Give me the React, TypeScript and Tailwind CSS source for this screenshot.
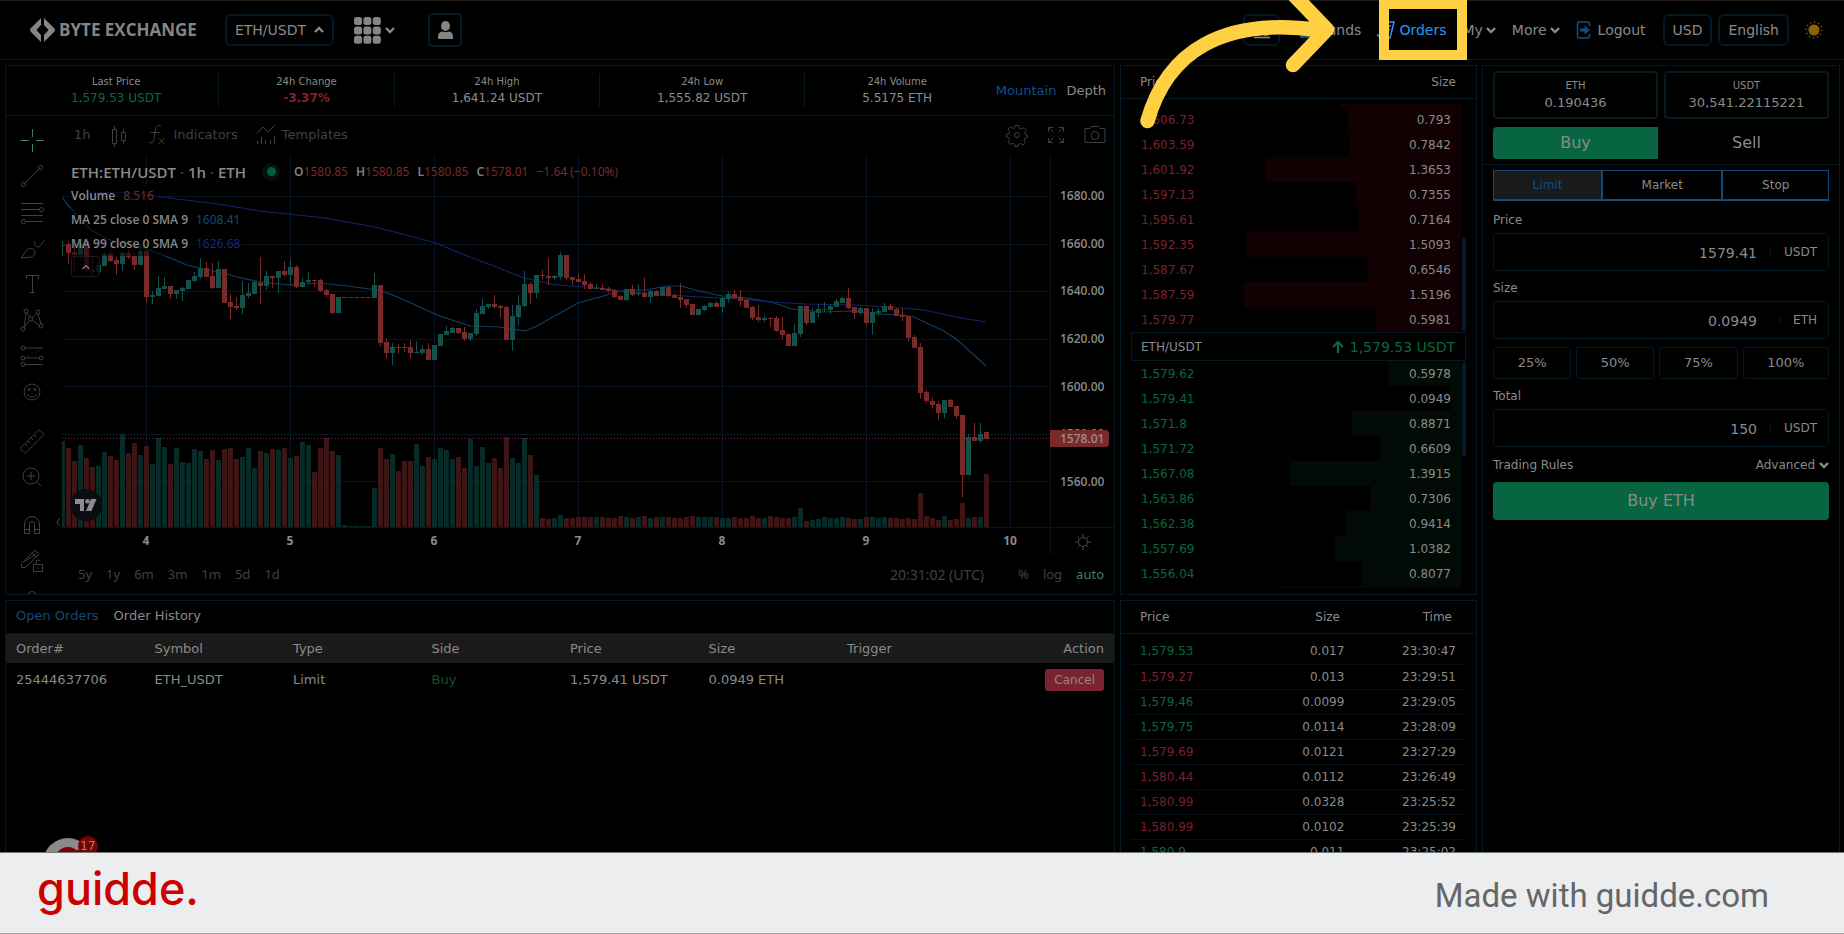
import React from "react";

type Candle = [string, number, number, number, number];

/* [direction, high, open/close top, open/close bottom, low], in thirds of a chart unit */
const EARLY: Candle[] = [
  ["u", 33, 44, 47, 77], ["d", 36, 42, 69, 102], ["d", 40, 66, 75, 122], ["u", 35, 38, 74, 90], ["d", 30, 33, 120, 130],
  ["d", 75, 120, 126, 142], ["u", 95, 105, 126, 130], ["u", 66, 72, 109, 109], ["d", 62, 72, 93, 96], ["d", 80, 90, 102, 135],
  ["u", 64, 68, 101, 122], ["d", 60, 70, 80, 88], ["d", 70, 78, 104, 120], ["u", 45, 63, 104, 104], ["d", 60, 62, 201, 220],
  ["u", 183, 196, 201, 222], ["u", 138, 174, 198, 198], ["u", 140, 168, 177, 177], ["d", 168, 168, 192, 206], ["u", 180, 180, 192, 208],
  ["u", 172, 174, 184, 213], ["u", 150, 150, 177, 177], ["u", 125, 138, 152, 156], ["u", 84, 114, 141, 146], ["d", 97, 114, 140, 140],
  ["d", 100, 137, 174, 177], ["u", 92, 117, 174, 174], ["d", 117, 117, 219, 219], ["d", 192, 216, 231, 267], ["d", 202, 228, 234, 240],
  ["u", 153, 195, 234, 252], ["u", 160, 189, 198, 204], ["u", 152, 156, 192, 192], ["d", 81, 158, 168, 222], ["u", 123, 138, 168, 180],
  ["d", 138, 138, 144, 174], ["u", 123, 123, 144, 188], ["d", 94, 122, 136, 138], ["u", 87, 111, 136, 168], ["d", 105, 111, 171, 174],
  ["u", 144, 156, 171, 171], ["u", 126, 150, 157, 162], ["d", 150, 150, 153, 170], ["d", 147, 150, 183, 186], ["d", 178, 180, 195, 201],
  ["d", 192, 192, 249, 252], ["u", 201, 201, 249, 249], ["u", 201, 201, 204, 204], ["u", 201, 201, 204, 204], ["u", 201, 201, 204, 204],
  ["u", 201, 201, 204, 204], ["u", 201, 201, 204, 204], ["u", 129, 165, 204, 204], ["d", 165, 165, 339, 348], ["d", 324, 336, 368, 388],
  ["u", 339, 351, 368, 405], ["d", 342, 351, 354, 372], ["d", 340, 351, 354, 366], ["d", 330, 351, 368, 387], ["u", 334, 366, 369, 369],
  ["u", 345, 357, 368, 375], ["d", 340, 357, 390, 390], ["u", 345, 345, 390, 390], ["u", 312, 312, 349, 349], ["u", 288, 303, 314, 314],
  ["u", 290, 294, 308, 308], ["d", 294, 294, 308, 312], ["d", 290, 306, 328, 332], ["u", 309, 309, 328, 332], ["u", 237, 249, 312, 318],
  ["u", 207, 228, 252, 252], ["u", 222, 222, 230, 237], ["d", 195, 222, 231, 234], ["d", 225, 228, 234, 264], ["d", 228, 231, 330, 330],
  ["u", 225, 258, 330, 363], ["u", 195, 225, 261, 285], ["u", 123, 162, 228, 232], ["d", 156, 162, 189, 222], ["u", 135, 135, 189, 204],
  ["d", 120, 135, 139, 147], ["d", 84, 139, 144, 165], ["u", 135, 138, 144, 150], ["u", 66, 75, 141, 146], ["d", 75, 75, 144, 150],
];
const LATE: Candle[] = [
  ["d", -9, -9, 0, 15], ["d", -21, -3, 6, 6], ["d", -18, 3, 14, 27], ["d", 6, 12, 26, 27], ["u", 12, 23, 27, 28],
  ["d", 12, 25, 30, 30], ["d", 21, 27, 32, 38], ["d", 30, 30, 50, 54], ["d", 45, 48, 59, 60], ["u", 27, 27, 60, 62],
  ["d", 15, 27, 45, 48], ["u", 12, 38, 41, 48], ["d", -6, 39, 51, 52], ["u", 30, 33, 51, 69], ["d", 30, 33, 47, 48],
  ["u", 20, 21, 47, 48], ["d", 21, 21, 47, 50], ["d", 38, 45, 53, 54], ["d", 10, 51, 60, 84], ["d", 56, 57, 74, 84],
  ["d", 72, 72, 104, 105], ["u", 87, 87, 104, 105], ["u", 74, 78, 90, 93], ["u", 66, 69, 80, 81], ["d", 63, 69, 80, 81],
  ["u", 52, 54, 81, 99], ["u", 36, 42, 57, 68], ["d", 30, 42, 53, 57], ["d", 30, 51, 62, 78], ["d", 60, 60, 84, 84],
  ["d", 78, 81, 113, 119], ["d", 75, 111, 119, 126], ["u", 108, 114, 119, 126], ["d", 111, 113, 116, 140], ["d", 108, 114, 152, 156],
  ["d", 111, 150, 164, 177], ["d", 162, 162, 197, 197], ["u", 132, 159, 197, 197], ["u", 78, 78, 161, 170], ["d", 78, 78, 129, 134],
  ["u", 84, 96, 129, 129], ["u", 72, 87, 98, 110], ["u", 66, 87, 90, 95], ["u", 76, 78, 90, 102], ["u", 56, 63, 80, 81],
  ["u", 51, 54, 69, 69], ["d", 24, 54, 84, 87], ["d", 80, 81, 98, 117], ["u", 81, 84, 98, 104], ["d", 84, 84, 129, 134],
  ["u", 84, 96, 129, 165], ["u", 84, 93, 99, 108], ["u", 69, 78, 95, 95], ["d", 72, 78, 90, 90], ["d", 84, 86, 108, 108],
  ["d", 84, 104, 111, 122], ["d", 108, 108, 174, 186], ["d", 165, 171, 203, 203], ["d", 189, 201, 339, 357], ["d", 330, 336, 363, 369],
  ["d", 354, 363, 375, 384], ["d", 363, 372, 399, 420], ["u", 360, 360, 399, 414], ["d", 357, 360, 380, 381], ["d", 378, 378, 408, 417],
  ["d", 405, 405, 585, 651], ["u", 462, 471, 585, 585], ["d", 429, 471, 482, 483], ["u", 429, 462, 482, 489], ["d", 456, 456, 477, 477],
];
const shift = (by: number) => (c: Candle): Candle => [c[0], (c[1] + by) / 3, (c[2] + by) / 3, (c[3] + by) / 3, (c[4] + by) / 3];
const CANDLES: Candle[] = [...EARLY.map(shift(690)), ...LATE.map(shift(840))];

/* volume bar tops, in thirds, where 741 is the base line */
const VOLUMES = [
  484, 504, 543, 495, 534, 561, 558, 516, 528, 540, 462, 519, 489, 525, 498, 552, 474, 501, 552, 504, 546, 549, 507, 513, 537, 510, 540, 507, 504, 537,
  531, 504, 564, 513, 519, 507, 510, 504, 534, 528, 486, 495, 576, 504, 474, 513, 525, 735, 738, 738, 738, 738, 624, 504, 537, 522, 573, 543, 543, 492,
  558, 531, 537, 504, 510, 537, 531, 564, 477, 558, 501, 549, 534, 564, 471, 534, 549, 474, 525, 585, 714, 717, 714, 705, 714, 714, 711, 711, 711, 711,
  711, 714, 714, 708, 711, 714, 711, 708, 714, 711, 711, 711, 714, 714, 711, 708, 711, 711, 711, 711, 714, 714, 711, 714, 714, 708, 714, 714, 708, 711,
  714, 714, 711, 684, 723, 720, 717, 711, 714, 714, 711, 714, 717, 717, 711, 711, 714, 711, 714, 714, 717, 714, 717, 639, 708, 714, 720, 708, 720, 717,
  669, 714, 711, 711, 582,
];

const MA25 =
  "62,197 68,205 78,216 91,230 110,240 147,249 163,255 187,265 203,269 227,274 237,277 260,282 290,285 320,283 347,286 370,289 382,291 400,298 437,315 470,326 500,327 525,331 537,326 560,313 578,303 596,298 614,293 626,290 646,290 667,286 681,286 699,291 722,296 740,297 771,302 792,309 821,312 853,311 878,314 903,315 914,317 931,325 944,331 956,339 964,346 986,366";
const MA99 =
  "92,192 126,193 161,197 218,204 260,211 325,218 375,227 406,235 436,243 467,256 494,266 524,278 551,284 570,286 589,287 610,289 626,292 642,293 699,297 740,299 774,302 806,304 856,305 903,308 924,310 956,317 967,319 986,322";

const s = { fill: "none", stroke: "currentColor", strokeWidth: 1 } as const;

function Svg({ children, className = "size-7" }: { children: React.ReactNode; className?: string }) {
  return (
    <svg viewBox="0 0 28 28" className={className} {...s} aria-hidden="true">
      {children}
    </svg>
  );
}

const TOOLS: { name: string; art: React.ReactNode }[] = [
  { name: "Cross", art: <path className="text-[#3f7d75]" stroke="currentColor" d="M14.5 3v8M14.5 18v8M3 14.5h8M18 14.5h8" /> },
  { name: "Trend line", art: <><circle cx="5.500" cy="22.500" r="2" /><circle cx="22.500" cy="5.500" r="2" /><path d="M7 21L21 7" /></> },
  { name: "Fib retracement", art: <><path d="M3 5.500h22M3 11.500h18.500M3 17.500h22M7.500 23.500H25" /><circle cx="23.500" cy="11.500" r="2" /><circle cx="5.500" cy="23.500" r="2" /></> },
  { name: "Brush", art: <path d="M3 23.500c3-2 3-5 6-8 3-2 7-1 8 1 1 3-2 7-6 7zM17 7c-1 3 0 6 3 6s4-5 7-7" /> },
  { name: "Text", art: <path d="M8.500 9V5.500h12V9M14.500 5.500v17M12 22.500h5" /> },
  { name: "Patterns", art: <><circle cx="8" cy="5" r="2" /><circle cx="20" cy="6" r="2" /><circle cx="5" cy="23" r="2" /><circle cx="23" cy="20" r="2" /><circle cx="12.500" cy="13" r="2" /><path d="M8 7L6 21M9 7l3 4M14 12l5-5M20 8l3 10M14 14l7 5M11 15l-5 6" /></> },
  { name: "Forecast", art: <><circle cx="5" cy="6" r="2" /><circle cx="5" cy="16" r="2" /><circle cx="23" cy="16" r="2" /><circle cx="5" cy="22.500" r="2" /><path d="M7 6h18M7 16h14M7 22.500h18" /><path d="M10 14L24 7" strokeDasharray="1 3" /></> },
  { name: "Icons", art: <><circle cx="14" cy="14" r="8" /><circle cx="11" cy="11.500" r="1" /><circle cx="17" cy="11.500" r="1" /><path d="M9.500 16c1.500 4 7.500 4 9 0" /></> },
  { name: "Measure", art: <path d="M3 20.500L20 3.500q1-1 2 0l3 3q1 1 0 2L8 25.500q-1 1-2 0l-3-3q-1-1 0-2zM7 17l2 2M10 14l2 2M13 11l2 2M16 8l2 2" /> },
  { name: "Zoom in", art: <><circle cx="13" cy="13" r="8" /><path d="M13 9v8M9 13h8M19 19l4 4" /></> },
  { name: "Magnet", art: <path d="M6.500 22.500V13a7.500 7.500 0 0 1 15 0v9.500h-5V13a2.500 2.500 0 0 0-5 0v9.500zM6.500 18.500h5M16.500 18.500h5" /> },
  { name: "Lock drawings", art: <><path d="M3.500 20.500v-4L16 4q1-1 2 0l2 2q1 1 0 2L7.500 20.500zM6 15l12-8M9 19L19 9M14 6l4 4" /><path d="M15.500 17.500h9v7h-9zM18 17.500V15q0-2 2-2 2 0 2 1M20 20.500v1.500" /></> },
  { name: "Hide drawings", art: <path d="M10 12.500a4 4 0 0 1 8 0v2M7 14.500h14v8H7z" /> },
];

const STATS = [
  ["Last Price", "1,579.53 USDT", "text-[#0a6b3d]"],
  ["24h Change", "-3.37%", "text-[#86202e] font-bold"],
  ["24h High", "1,641.24 USDT", "text-[#8c8c8c]"],
  ["24h Low", "1,555.82 USDT", "text-[#8c8c8c]"],
  ["24h Volume", "5.5175 ETH", "text-[#8c8c8c]"],
];

const ASKS: [string, string, number][] = [
  ["1,606.73", "0.793", 113], ["1,603.59", "0.7842", 112], ["1,601.92", "1.3653", 195], ["1,597.13", "0.7355", 105], ["1,595.61", "0.7164", 102],
  ["1,592.35", "1.5093", 215], ["1,587.67", "0.6546", 93], ["1,587.59", "1.5196", 217], ["1,579.77", "0.5981", 85],
];
const BIDS: [string, string, number][] = [
  ["1,579.62", "0.5978", 73], ["1,579.41", "0.0949", 11], ["1,571.8", "0.8871", 109], ["1,571.72", "0.6609", 81], ["1,567.08", "1.3915", 171],
  ["1,563.86", "0.7306", 90], ["1,562.38", "0.9414", 116], ["1,557.69", "1.0382", 127], ["1,556.04", "0.8077", 99],
];
const TRADES: [string, string, string, boolean][] = [
  ["1,579.53", "0.017", "23:30:47", true], ["1,579.27", "0.013", "23:29:51", false], ["1,579.46", "0.0099", "23:29:05", true],
  ["1,579.75", "0.0114", "23:28:09", true], ["1,579.69", "0.0121", "23:27:29", false], ["1,580.44", "0.0112", "23:26:49", false],
  ["1,580.99", "0.0328", "23:25:52", false], ["1,580.99", "0.0102", "23:25:39", false], ["1,580.9", "0.011", "23:25:02", true],
];

function Chevron({ up = false }: { up?: boolean }) {
  return (
    <svg viewBox="0 0 10 8" className="h-2 w-2.5 shrink-0" fill="none" stroke="currentColor" strokeWidth="2.4" aria-hidden="true">
      <path d={up ? "M1 6l4-4 4 4" : "M1 2l4 4 4-4"} />
    </svg>
  );
}

function Header() {
  return (
    <header className="relative flex h-[60px] shrink-0 items-center border-t border-b border-t-[#1c1c1c] border-b-[#051522] pl-[30px] pr-[21px] text-sm">
      <a href="#home" className="flex items-center gap-1 text-[#858585]">
        <svg viewBox="0 0 25 24" className="h-6 w-[25px]" fill="currentColor" aria-hidden="true">
          <path d="M11 0v7L6.500 12l4.500 5v7L1 14q-2-2 0-4zM14 0v7l4.500 5-4.500 5v7l10-10q2-2 0-4z" />
        </svg>
        <span className="font-['Open_Sans',sans-serif] text-[17px] font-bold whitespace-nowrap">BYTE EXCHANGE</span>
      </a>
      <button className="ml-7 flex h-8 items-center gap-2 rounded-md border-2 border-[#051826] px-2">
        ETH/USDT <Chevron up />
      </button>
      <button aria-label="All markets" className="ml-5 flex items-center gap-1">
        <svg viewBox="0 0 27 27" className="size-[27px]" fill="#858585" aria-hidden="true">
          {[0, 1, 2].map((r) => [0, 1, 2].map((c) => <rect key={`${r}${c}`} x={c * 9.4} y={r * 9.4} width="8" height="8" rx="2.500" />))}
        </svg>
        <Chevron />
      </button>
      <button aria-label="Account" className="ml-[33px] flex h-[34px] w-[34px] items-center justify-center rounded-[4px] border-2 border-[#051826]">
        <svg viewBox="0 0 15 18" className="h-[18px] w-[15px]" fill="#858585" aria-hidden="true">
          <ellipse cx="7.500" cy="5" rx="4.500" ry="5" />
          <path d="M0 17v-1q0-5 4-5.500 3.500 1.500 7 0 4 .5 4 5.500v1q0 1-1 1H1q-1 0-1-1z" />
        </svg>
      </button>
      <nav className="ml-auto flex items-center">
        <button aria-label="Exchange" className="flex h-8 w-[37px] items-center justify-center rounded-md border-2 border-[#051826]">
          <svg viewBox="0 0 18 18" className="size-[18px]" fill="none" stroke="currentColor" strokeWidth="1.500" aria-hidden="true">
            <path d="M2 6l7-5 7 5zM3.500 8v6h3V8M11.500 8v6h3V8M9 8v6M1 16.500h16" />
          </svg>
        </button>
        <a href="#funds" className="ml-5 flex items-center gap-1">
          <svg viewBox="0 0 16 16" className="size-4" fill="#124f80" aria-hidden="true">
            <path d="M0 2h14v3h2v11H0z" />
          </svg>
          Funds
        </a>
        <a href="#orders" className="ml-4 flex items-center gap-1 text-[#2b97f0]">
          <svg viewBox="0 0 18 18" className="size-[18px]" fill="none" stroke="currentColor" strokeWidth="1.500" aria-hidden="true">
            <path d="M9 1h8l-4 16H5M10 5h4M9 8.500h4M0 13q2 4 5 2" />
          </svg>
          Orders
        </a>
        <button className="ml-4 flex items-center gap-[3px]">My <Chevron /></button>
        <button className="ml-4 flex items-center gap-[3px]">More <Chevron /></button>
        <a href="#logout" className="ml-4 flex items-center gap-1.5">
          <svg viewBox="0 0 16 19" className="h-[19px] w-4" aria-hidden="true">
            <path d="M13.500 5V2.500q0-1.500-1.500-1.500H3Q1.500 1 1.500 2.500v13Q1.500 17 3 17h9q1.500 0 1.500-1.500V13" fill="none" stroke="#124f80" strokeWidth="1.500" />
            <path d="M4 7.500h4.500V4.500L14 9l-5.500 4.500v-3H4z" fill="#124f80" />
          </svg>
          Logout
        </a>
        <button className="ml-[17px] flex h-8 items-center rounded-md border-2 border-[#051826] px-2">USD</button>
        <button className="ml-1.5 flex h-8 items-center rounded-md border-2 border-[#051826] px-2">English</button>
        <button aria-label="Theme" className="ml-4">
          <svg viewBox="0 0 18 18" className="size-[18px]" aria-hidden="true">
            <circle cx="9" cy="9" r="5.500" fill="#8a6508" />
            <circle cx="9" cy="9" r="7.800" fill="none" stroke="#8a6508" strokeWidth="1.800" strokeDasharray="1 3.080" />
          </svg>
        </button>
      </nav>
      <svg viewBox="1135 0 205 130" className="pointer-events-none absolute -top-px right-[504px] z-20 h-[130px] w-[205px]" fill="none" stroke="#ffd042" strokeWidth="14.500" strokeLinecap="round" strokeLinejoin="round" aria-hidden="true">
        <path d="M1147.500 121C1167 52 1222 17 1318 30" />
        <path d="M1290-9L1327 29.500 1293 65" />
      </svg>
      <div className="pointer-events-none absolute -top-px right-[377px] z-20 h-[60px] w-[88px] border-10 border-t-9 border-[#ffd042]" />
    </header>
  );
}

function PriceChart() {
  return (
    <svg viewBox="62 155 988 372" preserveAspectRatio="xMinYMin slice" className="block size-full" shapeRendering="crispEdges" role="img" aria-label="ETH/USDT hourly candles">
      <g stroke="#051523" strokeWidth="1">
        {[146, 290, 434, 578, 722, 866, 1010].map((x) => <path key={x} d={`M${x}.500 155V527`} />)}
        {[196, 244, 291, 339, 386, 434, 481].map((y) => <path key={y} d={`M62 ${y}.500H1050`} />)}
      </g>
      {VOLUMES.map((v, i) => (
        <rect key={i} x={60 + i * 6} y={280 + v / 3} width="5" height={(741 - v) / 3} fill={CANDLES[i][0] === "u" ? "#0b332f" : "#481918"} fillOpacity="0.85" />
      ))}
      <g fill="none" strokeWidth="1.200" shapeRendering="auto">
        <polyline points={MA25} stroke="#0f3f66" />
        <polyline points={MA99} stroke="#13246b" />
      </g>
      {CANDLES.map(([dir, hi, top, bottom, lo], i) => (
        <g key={i} fill={dir === "u" ? "#13524c" : "#782a29"}>
          <rect x={62 + i * 6} y={Math.round(hi)} width="1" height={Math.max(1, Math.round(lo) - Math.round(hi))} />
          <rect x={60 + i * 6} y={Math.round(top)} width="5" height={Math.max(1, Math.round(bottom) - Math.round(top))} />
        </g>
      ))}
      <path d="M62 438.500H1050" stroke="#782a29" strokeDasharray="1 2" />
    </svg>
  );
}

const chartFont = "font-['Noto_Sans',sans-serif]";
const legendFont = "font-['Open_Sans',sans-serif]";

function ChartPanel() {
  const ohlc = [["O", "1580.85"], ["H", "1580.85"], ["L", "1580.85"], ["C", "1578.01"]];
  return (
    <section className="border border-[#051826]">
      <div className="flex h-[50px] items-center border-b border-[#051826] pl-2">
        {STATS.map(([label, value, tone], i) => (
          <div key={label} className={`flex h-[33px] flex-col items-center px-[57px] whitespace-nowrap ${i < 4 ? "border-r border-[#051826]" : ""}`}>
            <span className="text-[10px] leading-[15px]">{label}</span>
            <span className={`text-xs leading-[18px] ${tone}`}>{value}</span>
          </div>
        ))}
        <div className="ml-auto flex gap-2.5 pr-2 text-[13px]">
          <button className="text-[#104e8c]">Mountain</button>
          <button>Depth</button>
        </div>
      </div>
      <div className="flex h-[478px] overflow-hidden">
        <div className="relative flex w-14 shrink-0 flex-col items-center overflow-hidden pt-1.5 pr-1 text-[#3f4044]">
          {TOOLS.map((t, i) => (
            <button key={t.name} aria-label={t.name} className={`flex h-9 shrink-0 items-center justify-center ${i === 8 ? "mt-[13px]" : i === 10 ? "mt-3" : ""}`}>
              <Svg>{t.art}</Svg>
            </button>
          ))}
          <svg viewBox="0 0 4 8" className="absolute right-0.5 bottom-[68px] h-2 w-1" fill="none" stroke="#555" aria-hidden="true">
            <path d="M3.500.5L1 4l2.500 3.500" />
          </svg>
        </div>
        <div className="flex min-w-0 grow flex-col">
          <div className="flex h-[39px] shrink-0 items-center pl-3 pb-px text-[13px] text-[#3f4044]">
            <button>1h</button>
            <button aria-label="Candles" className="ml-3.5">
              <Svg><path d="M7.500 8.500h4v14h-4zM9.500 5v3.500M9.500 22.500V26M16.500 11.500h4v8h-4zM18.500 8v3.500M18.500 19.500V23" /></Svg>
            </button>
            <button className="ml-2.5 flex items-center gap-[3px]">
              <Svg><path d="M18 5c-3-1.500-5 0-5.500 4L11 18c-.5 3.500-2 4.500-5 3.500M7.500 11.500H17M15.500 17l6 6M21.500 17l-6 6" /></Svg>
              Indicators
            </button>
            <button className="ml-3.5 flex items-center gap-0.5">
              <Svg><path d="M5 12l6-6 5 5 7-7M5.500 20v3M9.500 16v7M13.500 19v4M18.500 19v4M22.500 15v8" /></Svg>
              Templates
            </button>
            <div className="ml-auto flex items-center gap-[11px] pr-[5px]">
              <button aria-label="Settings">
                <Svg><circle cx="14" cy="14" r="2.500" /><path d="M12 4.500h4l.5 3 2 .8 2.500-1.800 2.500 2.500L21.700 11.500l.8 2 2 .5v2.500l-2.500.5-1 2 1.500 2.500-2.500 2.500-2.500-1.500-2 .8-.5 2.200h-3l-.5-2.500-2-.8L7.500 23.500 5 21l1.500-2.500-.8-2-2.200-.5v-3l2.500-.5.8-2L5 8l2.500-2.500L10 7.500l1.500-.5z" /></Svg>
              </button>
              <button aria-label="Full screen">
                <Svg><path d="M6.500 11V6.500H11M7 7l4.500 4.500M17 6.500h4.500V11M21 7l-4.500 4.500M6.500 17v4.500H11M7 21l4.500-4.500M17 21.500h4.500V17M21 21l-4.500-4.500" /></Svg>
              </button>
              <button aria-label="Snapshot">
                <Svg><path d="M4 7.500h5l1.500-2h7l1.500 2h5v14H4z" strokeLinejoin="round" /><circle cx="14" cy="14.500" r="4" /></Svg>
              </button>
            </div>
          </div>
          <div className="relative flex h-[372px] shrink-0">
            <div className="min-w-0 grow"><PriceChart /></div>
            <div className={`relative w-16 shrink-0 border-l border-[#101214] pt-[33px] text-xs font-semibold ${legendFont}`}>
              <div className="flex h-[302px] flex-col justify-between pl-[9px] leading-4">
                {["1680.00", "1660.00", "1640.00", "1620.00", "1600.00", "1580.00", "1560.00"].map((p) => <span key={p}>{p}</span>)}
              </div>
              <div className="absolute top-[275px] -left-px h-[17px] w-[59px] rounded-r-sm bg-[#7a2a2a] pl-2.5 leading-[17px] text-[#9a8a8a]">1578.01</div>
            </div>
            <div className={`absolute top-1 left-[9px] text-xs ${chartFont}`}>
              <div className="flex h-[25px] items-center">
                <span className={`text-[15px] font-semibold whitespace-nowrap ${legendFont}`}>ETH:ETH/USDT <span className="text-[#444]">·</span> 1h <span className="text-[#444]">·</span> ETH</span>
                <span className="ml-4 flex size-[18px] items-center justify-center rounded-full bg-[#03110f]"><span className="size-[9px] rounded-full bg-[#045a4d]" /></span>
                <span className="ml-3.5 flex gap-2 text-[#782a29]">
                  {ohlc.map(([k, v]) => <span key={k}><span className="font-semibold text-[#808080]">{k}</span>{v}</span>)}
                  <span>−1.64 (−0.10%)</span>
                </span>
              </div>
              {[["Volume", "8.516", "text-[#782a29]"], ["MA 25 close 0 SMA 9", "1608.41", "text-[#124a78]"], ["MA 99 close 0 SMA 9", "1626.68", "text-[#16277a]"]].map(([k, v, tone]) => (
                <div key={k} className="flex h-6 w-fit items-center gap-2 bg-black/50 pr-1">
                  <span className={`font-semibold ${legendFont}`}>{k}</span><span className={tone}>{v}</span>
                </div>
              ))}
              <button aria-label="Collapse legend" className="flex h-[21px] w-[29px] items-center justify-center rounded-[3px] border border-[#191c20] bg-black/70">
                <svg viewBox="0 0 10 6" className="h-1.5 w-2.5" fill="none" stroke="#808080" strokeWidth="1.200" aria-hidden="true"><path d="M1.500 5L5 1.500 8.500 5" /></svg>
              </button>
            </div>
            <a href="#tradingview" aria-label="TradingView" className="absolute bottom-1.5 left-2 flex size-8 items-center justify-center rounded-full bg-[#0b0b12]">
              <svg viewBox="0 0 22 12" className="h-3 w-[22px]" fill="#8c8c8c" aria-hidden="true">
                <path d="M0 0h9v12H5V5H0zM16 0h5.500l-5 12H11z" /><circle cx="12.500" cy="2.300" r="2.300" />
              </svg>
            </a>
          </div>
          <div className="flex h-7 shrink-0 border-t border-[#101214]">
            <div className={`flex min-w-0 grow overflow-hidden pl-3 text-center text-xs leading-[25px] font-bold ${chartFont}`}>
              {[4, 5, 6, 7, 8, 9, 10].map((d) => <span key={d} className="w-36 shrink-0">{d}</span>)}
            </div>
            <button aria-label="Axis settings" className="flex w-16 shrink-0 items-center justify-center border-l border-[#101214] text-[#4a4b50]">
              <svg viewBox="0 0 16 16" className="size-4" {...s} aria-hidden="true">
                <circle cx="8" cy="8" r="4.500" /><path d="M8 0v3M8 13v3M0 8h3M13 8h3M2.500 2.500l2 2M11.500 11.500l2 2M13.500 2.500l-2 2M4.500 11.500l-2 2" />
              </svg>
            </button>
          </div>
          <div className={`flex grow items-center gap-3.5 pr-2.5 pl-4 text-[13px] text-[#3f4044] ${chartFont}`}>
            {["5y", "1y", "6m", "3m", "1m", "5d", "1d"].map((r) => <button key={r}>{r}</button>)}
            <span className="ml-auto text-sm">20:31:02 (UTC)</span>
            <button className="ml-5">%</button>
            <button>log</button>
            <button className="text-[#3f7d75]">auto</button>
          </div>
        </div>
      </div>
    </section>
  );
}

function BookRow({ row, ask }: { row: [string, string, number]; ask: boolean }) {
  return (
    <li className="relative flex h-[25px] items-center justify-between pr-[10px] pl-[10px]">
      <span className={`absolute inset-y-0 right-0 ${ask ? "bg-[#110103]" : "bg-[#020a05]"}`} style={{ width: row[2] }} />
      <span className={`relative ${ask ? "text-[#78222f]" : "text-[#0a683f]"}`}>{row[0]}</span>
      <span className="relative">{row[1]}</span>
    </li>
  );
}

function OrderBook() {
  return (
    <section className="border border-[#051826] text-xs">
      <div className="flex h-[33px] items-center justify-between border-b border-[#051826] pr-5 pl-[19px]"><span>Price</span><span>Size</span></div>
      <div className="pr-2.5 pl-2.5">
        <div className="relative pt-[5px] pr-[5px]">
          <div className="ml-auto h-[3px] w-[121px] bg-[#110103]" />
          <ul>{ASKS.map((r) => <BookRow key={r[0]} row={r} ask />)}</ul>
          <span className="absolute right-0 bottom-px h-[94px] w-1 rounded-full bg-[#061a2b]" />
        </div>
        <div className="flex h-[29px] items-center justify-between border border-[#051826] pr-2.5 pl-[9px]">
          <span>ETH/USDT</span>
          <span className="flex items-center gap-1.5 text-sm text-[#0a683f]">
            <svg viewBox="0 0 12 13" className="h-[13px] w-3" fill="none" stroke="currentColor" strokeWidth="2.200" aria-hidden="true"><path d="M6 13V2M1 7l5-5 5 5" /></svg>
            1,579.53 USDT
          </span>
        </div>
        <div className="relative pr-[5px]">
          <ul>{BIDS.map((r) => <BookRow key={r[0]} row={r} ask={false} />)}</ul>
          <div className="ml-auto h-0.5 w-[183px] bg-[#020a05]" />
          <span className="absolute top-px right-0 h-[94px] w-1 rounded-full bg-[#061a2b]" />
        </div>
      </div>
    </section>
  );
}

function Trades() {
  return (
    <section className="min-h-0 overflow-hidden border border-b-0 border-[#051826] text-xs">
      <div className="flex h-[33px] items-center border-b border-[#051826] pr-6 pl-[19px]">
        <span className="w-[90px]">Price</span><span className="w-[110px] text-right">Size</span><span className="grow text-right">Time</span>
      </div>
      <div className="px-2.5 pt-[5px]">
        <table className="w-full table-fixed">
          <tbody>
            {TRADES.map(([p, q, t, up]) => (
              <tr key={t} className="h-[25px] border-b border-[#040f1a]">
                <td className={`pl-[9px] ${up ? "text-[#0a683f]" : "text-[#78222f]"}`}>{p}</td>
                <td className="pr-2.5 text-right">{q}</td>
                <td className="pr-2.5 text-right">{t}</td>
              </tr>
            ))}
          </tbody>
        </table>
      </div>
    </section>
  );
}

function Orders() {
  const cell = "px-2.5 text-left font-normal whitespace-nowrap";
  return (
    <section className="min-h-0 overflow-hidden border border-b-0 border-[#051826] text-[13px]">
      <div className="flex h-[33px] items-center gap-[15px] border-b border-[#051826] pb-0.5 pl-2.5">
        <button className="text-[#104b79]">Open Orders</button>
        <button>Order History</button>
      </div>
      <table className="w-full table-fixed">
        <thead>
          <tr className="h-[29px] bg-[#1a1a1a]">
            {["Order#", "Symbol", "Type", "Side", "Price", "Size", "Trigger"].map((h) => <th key={h} className={cell}>{h}</th>)}
            <th className="px-2.5 text-right font-normal">Action</th>
          </tr>
        </thead>
        <tbody>
          <tr className="h-[33px]">
            <td className={cell}>25444637706</td>
            <td className={cell}>ETH_USDT</td>
            <td className={cell}>Limit</td>
            <td className={`${cell} text-[#12522a]`}>Buy</td>
            <td className={cell}>1,579.41 USDT</td>
            <td className={cell}>0.0949 ETH</td>
            <td className={cell} />
            <td className="px-2.5 text-right"><button className="h-[22px] rounded-[3px] bg-[#7a2432] px-[9px] text-xs">Cancel</button></td>
          </tr>
        </tbody>
      </table>
    </section>
  );
}

function Field({ label, value, unit }: { label: string; value: string; unit: string }) {
  return (
    <label className="block text-xs">
      <span className="block leading-[17px]">{label}</span>
      <span className="mt-1 flex h-[38px] items-center rounded-[4px] border border-[#051826] pr-[11px]">
        <input defaultValue={value} className="min-w-0 grow bg-transparent pt-0.5 text-right text-sm outline-none" />
        <span className="flex w-[60px] justify-end">
          <span className="h-2.5 border-l border-[#051826] pl-[13px] leading-[10px]">{unit}</span>
        </span>
      </span>
    </label>
  );
}

function TradeForm() {
  return (
    <section className="row-span-2 min-h-0 overflow-hidden border border-b-0 border-[#051826] px-2.5 pt-[5px] text-xs">
      <div className="grid grid-cols-2 gap-1.5">
        {[["ETH", "0.190436"], ["USDT", "30,541.22115221"]].map(([k, v]) => (
          <div key={k} className="flex h-12 flex-col items-center justify-center rounded-[4px] border-2 border-[#051826] text-[13px] leading-[18px]">
            <span className="text-[10px] leading-4">{k}</span>{v}
          </div>
        ))}
      </div>
      <div className="mt-2 grid h-8 grid-cols-2 gap-1.5 text-base">
        <button className="rounded-l-[4px] bg-[#076641]">Buy</button>
        <button>Sell</button>
      </div>
      <hr className="-mx-2.5 mt-[5px] border-[#051826]" />
      <div className="mt-[5px] flex h-[31px] border border-b-2 border-[#124b78]">
        <button className="flex-auto bg-[#1a1a1a] text-[#124f80]">Limit</button>
        <button className="flex-auto border-x-2 border-[#124b78]">Market</button>
        <button className="flex-auto">Stop</button>
      </div>
      <div className="mt-[11px]"><Field label="Price" value="1579.41" unit="USDT" /></div>
      <div className="mt-[9px]"><Field label="Size" value="0.0949" unit="ETH" /></div>
      <div className="mt-2 flex h-8 gap-[5px] text-[13px]">
        {["25%", "50%", "75%", "100%"].map((p) => <button key={p} className="flex-auto rounded-[3px] border border-[#051826]">{p}</button>)}
      </div>
      <div className="mt-[9px]"><Field label="Total" value="150" unit="USDT" /></div>
      <div className="mt-[9px] flex h-[18px] items-center justify-between">
        <a href="#rules">Trading Rules</a>
        <button className="flex items-center gap-1">Advanced <Chevron /></button>
      </div>
      <button className="mt-2 h-[38px] w-full rounded-[4px] bg-[#076641] text-base">Buy ETH</button>
    </section>
  );
}

export default function App() {
  return (
    <div className="flex h-screen flex-col overflow-hidden bg-black font-['DejaVu_Sans',sans-serif] text-[#8a8a8a]">
      <Header />
      <main className="relative grid min-h-0 grow grid-cols-[minmax(0,1fr)_357px_358px] grid-rows-[530px_minmax(0,1fr)] gap-x-[5px] gap-y-[5px] overflow-hidden pt-[5px] pr-1 pl-[5px]">
        <ChartPanel />
        <OrderBook />
        <TradeForm />
        <Orders />
        <Trades />
        <button aria-label="Guides" className="absolute -bottom-9 left-[43px] size-[50px] rounded-full bg-[#8a8a8a]">
          <svg viewBox="0 0 50 50" className="size-full" fill="none" stroke="#7c0000" strokeWidth="6" aria-hidden="true"><circle cx="25" cy="22" r="10" /><path d="M36 12v22" /></svg>
          <span className="absolute -top-0.5 right-[-5px] flex size-5 items-center justify-center rounded-full bg-[#7c0000] text-xs">17</span>
        </button>
      </main>
      <footer className="flex h-[82px] shrink-0 items-center justify-between border-t border-b border-t-[#777] border-b-[#a9a9a9] bg-[#ecedef] pr-[75px] pl-[37px]">
        <span className="pb-2 font-['Inter',sans-serif] text-[45px] font-medium text-[#cc0000]">guidde.</span>
        <span className="pt-1.5 font-['Roboto',sans-serif] text-[33px] text-[#666]">Made with guidde.com</span>
      </footer>
    </div>
  );
}
